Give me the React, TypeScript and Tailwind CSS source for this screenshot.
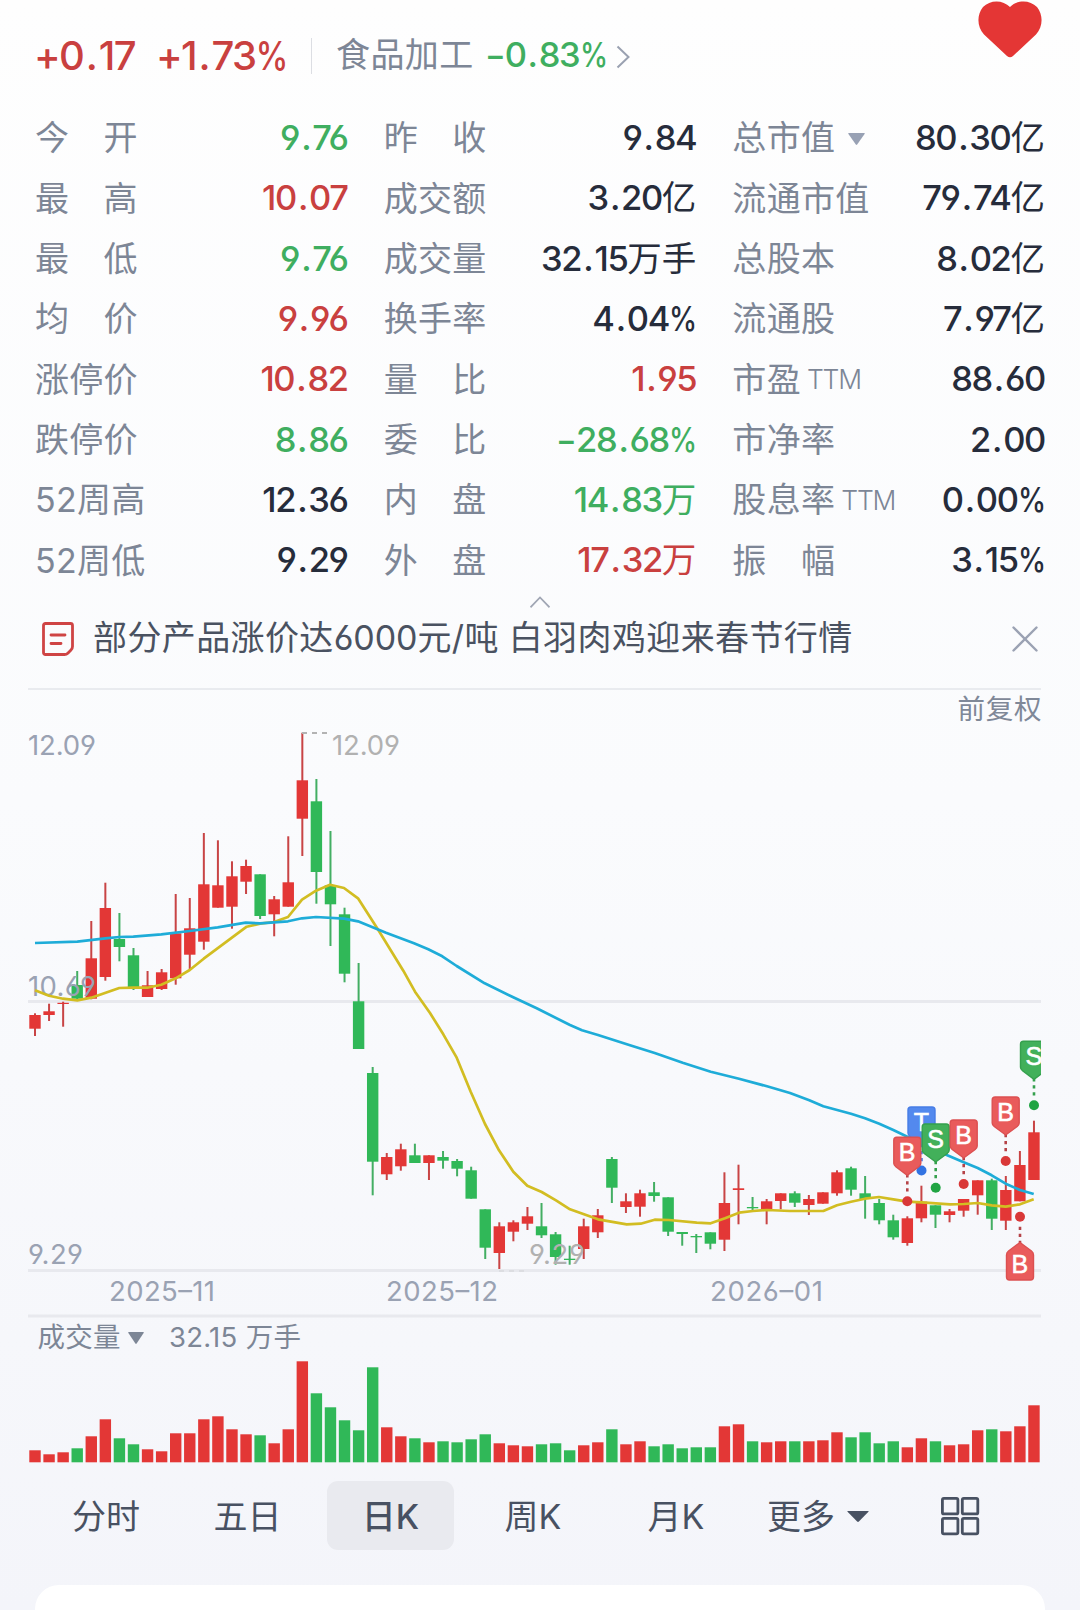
import React from 'react';

type Tone = 'up' | 'down' | 'flat';

const toneClass: Record<Tone, string> = {
  up: 'text-[#c9403f]',
  down: 'text-[#3fae60]',
  flat: 'text-[#262c3b]',
};

type Stat = { label: string; note?: string; menu?: boolean; value: string; tone?: Tone };

const columns: Stat[][] = [
  [
    { label: '今　开', value: '9.76', tone: 'down' },
    { label: '最　高', value: '10.07', tone: 'up' },
    { label: '最　低', value: '9.76', tone: 'down' },
    { label: '均　价', value: '9.96', tone: 'up' },
    { label: '涨停价', value: '10.82', tone: 'up' },
    { label: '跌停价', value: '8.86', tone: 'down' },
    { label: '52周高', value: '12.36' },
    { label: '52周低', value: '9.29' },
  ],
  [
    { label: '昨　收', value: '9.84' },
    { label: '成交额', value: '3.20亿' },
    { label: '成交量', value: '32.15万手' },
    { label: '换手率', value: '4.04%' },
    { label: '量　比', value: '1.95', tone: 'up' },
    { label: '委　比', value: '−28.68%', tone: 'down' },
    { label: '内　盘', value: '14.83万', tone: 'down' },
    { label: '外　盘', value: '17.32万', tone: 'up' },
  ],
  [
    { label: '总市值', menu: true, value: '80.30亿' },
    { label: '流通市值', value: '79.74亿' },
    { label: '总股本', value: '8.02亿' },
    { label: '流通股', value: '7.97亿' },
    { label: '市盈', note: 'TTM', value: '88.60' },
    { label: '市净率', value: '2.00' },
    { label: '股息率', note: 'TTM', value: '0.00%' },
    { label: '振　幅', value: '3.15%' },
  ],
];

const RED = '#e33736';
const GREEN = '#30b858';

// [rising, body top, body bottom, high, low, volume height]
type Candle = [number, number, number, number, number, number];

const candles: Candle[] = [
  [1, 1015, 1028.7, 1013.3, 1036, 12],
  [1, 1011.3, 1015, 1003.7, 1021, 8],
  [1, 1002.8, 1004, 1001.7, 1026.7, 10],
  [0, 985, 998.7, 971, 999, 14],
  [1, 958.3, 998.7, 921, 999.3, 26],
  [1, 908, 977, 882.7, 980.7, 43],
  [0, 939, 947, 913, 961.3, 24],
  [0, 955.3, 987.3, 948, 990, 18],
  [1, 985.3, 997, 971, 997, 13],
  [1, 972.3, 989, 969, 990, 11],
  [1, 933.3, 978.3, 894, 984.7, 29],
  [1, 928.3, 954.7, 898, 969, 29],
  [1, 884.3, 941.7, 833, 949.7, 43],
  [1, 885.3, 907.7, 840.3, 907.7, 46],
  [1, 876.3, 906.7, 861.3, 928.7, 33],
  [1, 866, 881.7, 859.7, 894, 28],
  [0, 874.3, 916, 874.3, 919, 27],
  [1, 899.3, 914.3, 896, 936.3, 19],
  [1, 882.3, 906.7, 836.3, 906.7, 33],
  [1, 780.3, 818.7, 732.7, 856, 101],
  [0, 801.3, 872, 779, 903.7, 69],
  [0, 885.3, 904.3, 831, 946, 55],
  [0, 914.3, 973.7, 907.7, 982.3, 42],
  [0, 1001.3, 1049, 963, 1049, 32],
  [0, 1073, 1161.7, 1067, 1195.3, 95],
  [1, 1157, 1174.3, 1153, 1180, 35],
  [1, 1149.3, 1166.3, 1143.7, 1170.7, 26],
  [0, 1155.3, 1163, 1143.7, 1163, 24],
  [1, 1155.3, 1163, 1155.3, 1180, 20],
  [0, 1157, 1160.7, 1151, 1168.7, 21],
  [0, 1161, 1168.7, 1159, 1176.3, 20],
  [0, 1170.3, 1198.7, 1166.7, 1198.7, 23],
  [0, 1209.3, 1247.7, 1209.3, 1259, 28],
  [1, 1226.3, 1253, 1222.3, 1269, 19],
  [1, 1222.3, 1231.7, 1220.3, 1241.3, 17],
  [1, 1216.3, 1223.7, 1207, 1230, 16],
  [0, 1226.3, 1235.3, 1203, 1238, 18],
  [0, 1234.3, 1257, 1232, 1264.7, 19],
  [0, 1258.7, 1260, 1245.7, 1264.7, 12],
  [1, 1226.3, 1249, 1218.7, 1259, 17],
  [1, 1215.3, 1232.3, 1209, 1238, 20],
  [0, 1159, 1187.7, 1157, 1203, 33],
  [1, 1201.3, 1207, 1193.3, 1213, 18],
  [1, 1193.3, 1206.7, 1189.7, 1216.7, 21],
  [0, 1192.3, 1196, 1182, 1201.7, 16],
  [0, 1197.3, 1231.7, 1197.3, 1236, 18],
  [0, 1232, 1234, 1232, 1245.7, 14],
  [0, 1236, 1237.3, 1234, 1253, 15],
  [0, 1232.3, 1243.7, 1232.3, 1249.3, 15],
  [1, 1203, 1239.7, 1172.3, 1251, 36],
  [1, 1188.3, 1190, 1164.7, 1224.3, 38],
  [0, 1207, 1208.3, 1197, 1211, 21],
  [1, 1201.3, 1210, 1199, 1224.3, 20],
  [1, 1193.3, 1201, 1193.3, 1209.3, 21],
  [0, 1193.3, 1202.7, 1191.3, 1207, 21],
  [1, 1199, 1205, 1195, 1215, 21],
  [1, 1192.3, 1203.7, 1192.3, 1203.7, 22],
  [1, 1172.3, 1193.3, 1170.3, 1195.7, 30],
  [0, 1168.3, 1189.7, 1166.7, 1195.7, 25],
  [0, 1193.3, 1199, 1176, 1218.7, 30],
  [0, 1203, 1220.3, 1199, 1224.3, 19],
  [0, 1220.3, 1237.3, 1214.7, 1239.7, 21],
  [1, 1218.3, 1243, 1216.3, 1245.7, 15],
  [1, 1201.7, 1218.3, 1185.7, 1222.3, 24],
  [0, 1205.3, 1214.7, 1205.3, 1228, 21],
  [1, 1211.3, 1215, 1209, 1222.3, 17],
  [1, 1199, 1210.7, 1199, 1216.7, 18],
  [1, 1180.3, 1195.3, 1180.3, 1214.7, 32],
  [0, 1180.3, 1218.7, 1178.7, 1230, 33],
  [1, 1190, 1220.7, 1176, 1230, 31],
  [1, 1165, 1201.3, 1151, 1201.3, 36],
  [1, 1132.3, 1180, 1120.7, 1180, 57],
];

const candleX = (i: number) => 35 + i * 14.07;

const fastAverage =
  '35,990.3 49,995.7 63,998.7 77.3,1000.3 91.3,997.7 119.3,988 133.3,987.7 147.3,987.7 161.3,984.7 175.7,978.3 189.7,970 203.7,958.7 246.7,926.7 260,923.7 274,922 288,917 302,899.7 316,890.7 330,884.7 344,888 358,898.3 378.3,930 403.3,970.7 415,991.7 430,1013 443.3,1034.3 456.7,1057.7 470.7,1091.7 485,1124 499,1150.3 513.3,1171.7 527.3,1185.7 541.7,1192 556,1200.3 570,1209.3 584,1214.3 598,1219.3 626.7,1224.3 640.7,1223.7 654.7,1219.7 668.7,1220 696.7,1222.7 710.7,1223.3 725,1218.3 739,1212.7 753,1211 767,1210 790,1211 823.3,1211 837,1205.3 851,1201.7 865,1198.7 879,1197 893.3,1199.3 907.3,1201.7 921.7,1202.3 950,1204.3 963.7,1204 977.7,1203 991.7,1205.3 1005.7,1206.7 1020,1204.3 1033.7,1199.3';

const slowAverage =
  '35,943 77.3,941.7 105.3,938.3 119.3,937 133.3,936.7 161.3,934.3 189.7,931 217.7,927.3 245.7,922.7 260,923.3 288,921.3 302,918.3 316,917 344,918.7 358,921.3 386,932.7 414,943.3 428.3,949.3 442.3,956.3 456.7,966 484.7,983.3 512.7,997 536.7,1008.3 570,1025 582,1030.3 598,1035 630,1045.3 654.7,1053 682.7,1062.7 710.7,1071.7 739,1078.7 767,1086.3 790,1093 809.3,1100.3 823.3,1106.3 851,1113.7 865,1118.3 879.3,1123.7 893.3,1130 907.3,1136.7 946.7,1155 963.7,1162.3 977.7,1168 991.7,1175.3 1005.7,1183.7 1020,1190 1033.7,1194';

type Trade = { x: number; top: number; dot: number; kind: 'B' | 'S' | 'T'; below?: boolean };

const tradeFill = { B: '#e95b5b', S: '#42b05a', T: '#5389ee' };
const tradeEdge = { B: '#dc5051', S: '#35a04d', T: '#477de6' };
const tradeDot = { B: '#d93838', S: '#20a443', T: '#3273e2' };

const trades: Trade[] = [
  { x: 921.5, top: 1107, dot: 1170.5, kind: 'T' },
  { x: 907.3, top: 1137.3, dot: 1201.3, kind: 'B' },
  { x: 935.7, top: 1124, dot: 1187.7, kind: 'S' },
  { x: 963.7, top: 1120, dot: 1184, kind: 'B' },
  { x: 1005.7, top: 1097, dot: 1161, kind: 'B' },
  { x: 1034, top: 1041.3, dot: 1105.3, kind: 'S' },
  { x: 1020, top: 1242, dot: 1216.7, kind: 'B', below: true },
];

function Marker({ x, top, dot, kind, below }: Trade) {
  const shape = below
    ? 'M0 .5 L11.5 9 Q13.5 10.5 13.5 13 V35 Q13.5 38 10.5 38 H-10.5 Q-13.5 38 -13.5 35 V13 Q-13.5 10.5 -11.5 9 Z'
    : 'M-10.5 0 H10.5 Q13.5 0 13.5 3 V26 Q13.5 28 11.5 29.5 L0 38 L-11.5 29.5 Q-13.5 28 -13.5 26 V3 Q-13.5 0 -10.5 0 Z';
  return (
    <g>
      <line
        x1={x}
        x2={x}
        y1={below ? dot + 10 : top + 37}
        y2={below ? top + 2 : dot - 6}
        stroke={kind === 'B' ? '#b54348' : tradeEdge[kind]}
        strokeWidth="2.6"
        strokeDasharray="3.2 3.8"
      />
      <circle cx={x} cy={dot} r="5" fill={tradeDot[kind]} />
      <g transform={`translate(${x} ${top})`}>
        <path d={shape} fill={tradeFill[kind]} stroke={tradeEdge[kind]} strokeWidth="1.4" />
        <text x="-.2" y={below ? 31 : 24.2} textAnchor="middle" fontSize="25" fill="#fff" className="font-['Liberation_Sans']" stroke="#fff" strokeWidth=".6">
          {kind}
        </text>
      </g>
    </g>
  );
}

function AxisText({ x, y, w, fill = '#9aa2b3', children }: { x: number; y: number; w: number; fill?: string; children: string }) {
  return (
    <text x={x} y={y} fill={fill} fontSize="27.5" textLength={w} lengthAdjust="spacing">
      {children}
    </text>
  );
}

function PriceChart() {
  return (
    <svg viewBox="28 690 1013 628" className="block h-[628px] w-[1013px]">
      <g stroke="#e8e9ee" strokeWidth="3">
        <line x1="28" x2="1041" y1="1001.5" y2="1001.5" />
        <line x1="28" x2="1041" y1="1270.5" y2="1270.5" />
        <line x1="28" x2="1041" y1="1316" y2="1316" />
      </g>
      {candles.map(([up, top, bottom, high, low], i) => (
        <g key={i} fill={up ? RED : GREEN}>
          <rect x={candleX(i) - 1} y={high} width="2" height={low - high} fill={up ? '#c84445' : '#43ae63'} />
          <rect x={candleX(i) - 5.7} y={top} width="11.4" height={Math.max(bottom - top, 1)} />
        </g>
      ))}
      <AxisText x={28} y={755} w={68}>12.09</AxisText>
      <AxisText x={28} y={995.5} w={68}>10.69</AxisText>
      <AxisText x={28} y={1264} w={55}>9.29</AxisText>
      <line x1="302" x2="328" y1="733" y2="733" stroke="#b3b3b3" strokeWidth="2.2" strokeDasharray="5 5" />
      <line x1="499" x2="525" y1="1271" y2="1271" stroke="#dcdde1" strokeWidth="2" strokeDasharray="5 5" />
      <AxisText x={332} y={755} w={68} fill="#b1b1b1">12.09</AxisText>
      <AxisText x={529} y={1264} w={56} fill="#b1b1b1">9.29</AxisText>
      <polyline points={fastAverage} fill="none" stroke="#d2bd22" strokeWidth="2.7" strokeLinejoin="round" />
      <polyline points={slowAverage} fill="none" stroke="#1eacd8" strokeWidth="2.7" strokeLinejoin="round" />
      {trades.map((t) => (
        <Marker key={`${t.x}`} {...t} />
      ))}
      <AxisText x={109} y={1301} w={106}>2025–11</AxisText>
      <AxisText x={386} y={1301} w={112}>2025–12</AxisText>
      <AxisText x={710} y={1301} w={113}>2026–01</AxisText>
      <text x="957.5" y="718.5" fontSize="27.5" fill="#7f8898" textLength="84">前复权</text>
    </svg>
  );
}

function VolumeChart() {
  return (
    <svg viewBox="28 1360 1013 104" className="block h-[104px] w-[1013px]">
      {candles.map(([up, , , , , v], i) => (
        <rect key={i} x={candleX(i) - 5.7} y={1462.3 - v} width="11.4" height={v} fill={up ? RED : GREEN} />
      ))}
    </svg>
  );
}

function Down({ className }: { className: string }) {
  return (
    <svg viewBox="0 0 20 12" preserveAspectRatio="none" className={className} fill="currentColor">
      <path d="M1 0h18q1.2 0 .5.9l-8.7 10.6q-.8.9-1.6 0L.5.9Q-.2 0 1 0Z" />
    </svg>
  );
}

// Sets a figure with an open decimal point, a narrow percent sign and a lighter unit.
function Figure({ text }: { text: string }) {
  const [, sign, whole, decimals, unit] = text.match(/^([+−]?)(\d+)\.(\d+)(.*)$/)!;
  return (
    <span className="inline-flex items-center tracking-[-0.04em]">
      {sign === '−' && <span className="-mr-[2px] inline-block origin-left scale-x-90">−</span>}
      {sign === '+' && <span>+</span>}
      <span>{whole}</span>
      <span className="mx-[0.06em]">.</span>
      <span>{decimals}</span>
      {unit === '%' && <span className="-ml-[0.16em] inline-block origin-right scale-x-[0.82]">%</span>}
      {unit !== '%' && unit && <span className="font-normal tracking-normal">{unit}</span>}
    </span>
  );
}

function StatRow({ label, note, menu, value, tone = 'flat' }: Stat) {
  return (
    <div className="flex h-[60.35px] items-center justify-between whitespace-nowrap">
      <div className="flex items-center text-[34px] tracking-[0.3px] text-[#7d8696]">
        <span>{label}</span>
        {note && <span className="ml-1.5 text-[26.5px] font-light tracking-[-1.2px]">{note}</span>}
        {menu && <Down className="mt-0.5 ml-[13px] h-3 w-[17px] text-[#98a1b4]" />}
      </div>
      <div className={`text-[34.5px] font-medium ${toneClass[tone]}`}>
        <Figure text={value} />
      </div>
    </div>
  );
}

export default function App() {
  return (
    <main className="flex h-[1610px] w-[1080px] flex-col overflow-hidden bg-linear-to-b from-[#fefefe] via-[#fafbfd] to-[#f4f5fa] font-['Inter','Noto_Sans_CJK_SC',sans-serif] leading-none [font-feature-settings:'cv03','cv04']">
      <header className="flex h-[108px] shrink-0 items-center pr-[38px] pl-[34px] whitespace-nowrap">
        <span className="mt-[3px] w-[122px] text-[40px] font-medium text-[#c9403f]"><Figure text="+0.17" /></span>
        <span className="mt-[3px] w-[155px] text-[40px] font-medium text-[#c9403f]"><Figure text="+1.73%" /></span>
        <span className="mt-1 h-9 w-px bg-[#dcdee3]" />
        <span className="mt-[2px] ml-[24px] w-[149px] text-[34px] tracking-[0.4px] text-[#7d8696]">食品加工</span>
        <span className="mt-[2px] w-[131px] text-[34.5px] font-medium text-[#3fae60]"><Figure text="−0.83%" /></span>
        <svg viewBox="0 0 14 24" className="mt-[5px] h-6 w-3.5" fill="none" stroke="#9aa1b1" strokeWidth="2">
          <path d="m1.5 1.5 11 10.5-11 10.5" />
        </svg>
        <svg viewBox="0 0 64 57" className="ml-auto h-[58px] w-16 self-start" fill="#e43635">
          <path d="M32 6.5C39-1 52-1 59 6.500c6.500 8 6 20-1 27.500L35 55.500q-3 2.400-6 0L6 34C-1 26.500-1.500 14.500 5 6.500 12-1 25-1 32 6.500Z" />
        </svg>
      </header>

      <section className="grid shrink-0 grid-cols-3 gap-x-9 pr-[35px] pl-[35px]">
        {columns.map((rows, c) => (
          <div key={c}>
            {rows.map((row) => (
              <StatRow key={row.label} {...row} />
            ))}
          </div>
        ))}
      </section>

      <div className="flex h-[17.5px] shrink-0 items-end justify-center">
        <svg viewBox="0 0 20 12" className="h-3 w-5" fill="none" stroke="#a0a6b4" strokeWidth="1.7">
          <path d="M.5 11.300 10 1.500l9.500 9.800" />
        </svg>
      </div>

      <section className="mx-7 flex h-[82px] w-[1013px] shrink-0 items-start border-b-2 border-[#e9ebef] pt-[13px] pl-[14px]">
        <svg viewBox="0 0 32 34" className="mt-px h-[34px] w-8" fill="none" stroke="#cf4444" strokeWidth="2.8" strokeLinecap="round">
          <path d="M3.500 1.500h25q2 0 2 2v21q0 2-1.500 3.500l-3.200 3.200q-1.300 1.300-3.300 1.300h-19q-2 0-2-2v-27q0-2 2-2ZM9 13h14M9 21.500h10" />
        </svg>
        <span className="ml-[19px] text-[34px] tracking-[0.38px] whitespace-nowrap text-[#4a5261]">部分产品涨价达<span className="tracking-[-0.1px]">6000</span>元/吨 白羽肉鸡迎来春节行情</span>
        <svg viewBox="0 0 26 26" className="mt-[5px] mr-[3px] ml-auto h-[26px] w-[26px]" fill="none" stroke="#9ba2b3" strokeWidth="2.4" strokeLinecap="round">
          <path d="m1.500 1.500 23 23m0-23-23 23" />
        </svg>
      </section>

      <section className="mx-7 shrink-0">
        <PriceChart />
        <div className="flex h-[42px] items-center pb-1 pl-[9.500px] text-[27.5px] tracking-[0.3px] text-[#7d8696]">
          <span>成交量</span>
          <Down className="mt-0.5 ml-[7px] h-3 w-4" />
          <span className="ml-[25px]">32.15 万手</span>
        </div>
        <VolumeChart />
      </section>

      <nav className="mt-[17px] flex h-[69px] shrink-0 items-center pl-[37px] text-[34px] text-[#485162]">
        <span className="w-[138px] pt-0.5 text-center">分时</span>
        <span className="mr-[7px] w-[145px] pt-0.5 text-center">五日</span>
        <span className="flex h-[69px] w-[127px] items-center justify-center rounded-[11px] bg-[#e9eaef] pt-0.5 font-medium">日K</span>
        <span className="w-[158px] pt-0.5 text-center">周K</span>
        <span className="w-[128px] pt-0.5 text-center">月K</span>
        <span className="ml-[27px] pt-0.5">更多</span>
        <Down className="mt-0.5 ml-3 h-[11px] w-[22px]" />
        <svg viewBox="0 0 40 40" className="ml-[71px] h-10 w-10" fill="none" stroke="#485162" strokeWidth="2.8">
          <rect x="2.400" y="2.400" width="15.500" height="15.500" rx="1.500" />
          <rect x="22.300" y="2.400" width="15.500" height="15.500" rx="1.500" />
          <rect x="2.400" y="22.300" width="15.500" height="15.500" rx="1.500" />
          <rect x="22.300" y="22.300" width="15.500" height="15.500" rx="1.500" />
        </svg>
      </nav>

      <div className="mx-[35px] mt-[35px] h-[60px] shrink-0 rounded-t-3xl bg-white" />
    </main>
  );
}
